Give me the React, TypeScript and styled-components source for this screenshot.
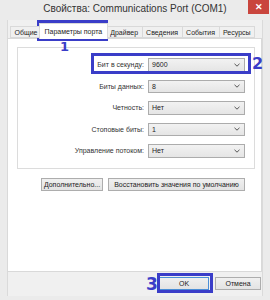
import * as React from 'react';
import styled, { createGlobalStyle } from 'styled-components';

const GlobalStyle = createGlobalStyle`
  html, body {
    margin: 0;
    padding: 0;
    background: #ececec;
  }
  * { box-sizing: border-box; }
`;

const Window = styled.div`
  position: relative;
  width: 270px;
  height: 300px;
  background: #ebebeb;
  font-family: "Liberation Sans", Arial, sans-serif;
  font-size: 7px;
  color: #1e1e1e;
  display: flex;
  flex-direction: column;
  overflow: hidden;
`;

const TitleBar = styled.div`
  height: 20px;
  display: flex;
  align-items: flex-start;
  justify-content: center;
  position: relative;
`;

const Title = styled.div`
  margin-top: 3px;
  font-size: 10px;
  color: #333;
`;

const CloseButton = styled.div`
  position: absolute;
  top: 0;
  right: 1px;
  width: 21px;
  height: 14px;
  background: #c9453d;
  color: #fff;
  font-size: 9px;
  font-weight: bold;
  display: flex;
  align-items: center;
  justify-content: center;
`;

const Client = styled.div`
  flex: 1;
  margin: 0 7px 4px 7px;
  background: #f0f0f0;
  border-left: 1px solid #dadada;
  border-right: 1px solid #dadada;
  display: flex;
  flex-direction: column;
`;

const TabStrip = styled.div`
  height: 18px;
  display: flex;
  align-items: flex-end;
  padding-left: 2px;
`;

const Tab = styled.div<{ $active?: boolean }>`
  height: ${(p) => (p.$active ? '16px' : '12px')};
  padding: 0 ${(p) => (p.$active ? '4.5px' : '3.5px')};
  margin: ${(p) => (p.$active ? '0 -2px -1px -2px' : '0 -1px 0 0')};
  display: flex;
  align-items: center;
  background: ${(p) => (p.$active ? '#fff' : '#f0f0f0')};
  border: 1px solid #d9d9d9;
  border-bottom: ${(p) => (p.$active ? 'none' : '1px solid #d9d9d9')};
  position: relative;
  z-index: ${(p) => (p.$active ? 2 : 1)};
  white-space: nowrap;
`;

const Panel = styled.div`
  height: 234px;
  margin-left: -1px;
  background: #fff;
  border: 1px solid #d9d9d9;
  padding: 8px 6px 0 9px;
  display: flex;
  flex-direction: column;
`;

const Group = styled.div`
  height: 122px;
  border: 1px solid #dcdcdc;
  padding-top: 10px;
  display: flex;
  flex-direction: column;
  gap: 8px;
`;

const Row = styled.div`
  display: flex;
  align-items: center;
  justify-content: flex-end;
  gap: 4px;
  padding-right: 9px;
  height: 13.5px;
`;

const Label = styled.span`
  color: #333;
`;

const Combo = styled.div`
  width: 97px;
  height: 13.5px;
  border: 1px solid #acacac;
  background: linear-gradient(#f2f2f2, #e5e5e5);
  display: flex;
  align-items: center;
  justify-content: space-between;
  padding: 0 4px 0 3px;
`;

const Chevron = () => (
  <svg width="6" height="4" viewBox="0 0 6 4">
    <path d="M0.5 0.8 L3 3.2 L5.5 0.8" fill="none" stroke="#555" strokeWidth="1" />
  </svg>
);

const ButtonRow = styled.div`
  display: flex;
  justify-content: flex-end;
  gap: 5px;
  margin-top: 9px;
  padding-right: 10px;
`;

const Button = styled.div<{ $w: number; $default?: boolean }>`
  width: ${(p) => p.$w}px;
  height: 13px;
  border: 1px solid ${(p) => (p.$default ? '#4c8fd6' : '#adadad')};
  background: linear-gradient(#f0f0f0, #e3e3e3);
  display: flex;
  align-items: center;
  justify-content: center;
  color: #222;
  white-space: nowrap;
`;

const Footer = styled.div`
  display: flex;
  justify-content: flex-end;
  align-items: center;
  gap: 6px;
  padding: 5px 1px 0 0;
`;

const Mark = styled.div<{ $x: number; $y: number; $w: number; $h: number }>`
  position: absolute;
  left: ${(p) => p.$x}px;
  top: ${(p) => p.$y}px;
  width: ${(p) => p.$w}px;
  height: ${(p) => p.$h}px;
  border: 3px solid #3a3dc8;
  pointer-events: none;
`;

const Num = styled.div<{ $x: number; $y: number; $size: number }>`
  position: absolute;
  left: ${(p) => p.$x}px;
  top: ${(p) => p.$y}px;
  font-family: "DejaVu Sans", sans-serif;
  font-weight: bold;
  font-size: ${(p) => p.$size}px;
  line-height: 1;
  color: #3a3dc8;
`;

const tabs = ['Общие', 'Параметры порта', 'Драйвер', 'Сведения', 'События', 'Ресурсы'];

const rows = [
  { label: 'Бит в секунду:', value: '9600' },
  { label: 'Биты данных:', value: '8' },
  { label: 'Четность:', value: 'Нет' },
  { label: 'Стоповые биты:', value: '1' },
  { label: 'Управление потоком:', value: 'Нет' },
];

export default function App() {
  return (
    <Window>
      <GlobalStyle />
      <TitleBar>
        <Title>Свойства: Communications Port (COM1)</Title>
        <CloseButton>✕</CloseButton>
      </TitleBar>
      <Client>
        <TabStrip>
          {tabs.map((t, i) => (
            <Tab key={t} $active={i === 1}>{t}</Tab>
          ))}
        </TabStrip>
        <Panel>
          <Group>
            {rows.map((r) => (
              <Row key={r.label}>
                <Label>{r.label}</Label>
                <Combo>
                  <span>{r.value}</span>
                  <Chevron />
                </Combo>
              </Row>
            ))}
          </Group>
          <ButtonRow>
            <Button $w={62}>Дополнительно...</Button>
            <Button $w={137}>Восстановить значения по умолчанию</Button>
          </ButtonRow>
        </Panel>
        <Footer>
          <Button $w={50} $default>OK</Button>
          <Button $w={46}>Отмена</Button>
        </Footer>
      </Client>
      <Mark $x={37} $y={20} $w={71} $h={21} />
      <Num $x={60} $y={40} $size={13}>1</Num>
      <Mark $x={91} $y={53} $w={160} $h={21} />
      <Num $x={252} $y={56} $size={16}>2</Num>
      <Mark $x={157} $y={273} $w={56} $h={20} />
      <Num $x={146} $y={276} $size={17}>3</Num>
    </Window>
  );
}
